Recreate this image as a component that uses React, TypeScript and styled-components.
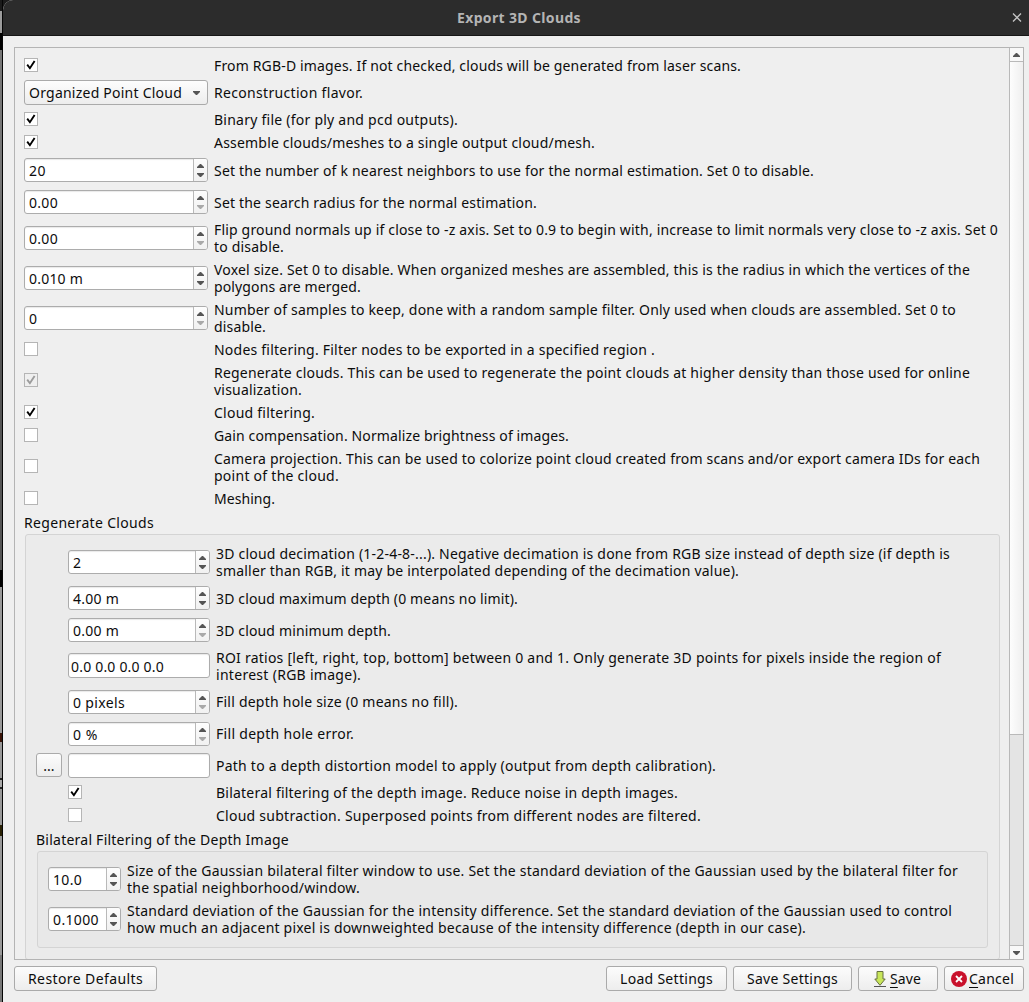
import React, { useLayoutEffect, useRef, useState } from "react";
import styled, { createGlobalStyle } from "styled-components";

const Global = createGlobalStyle`
  * { box-sizing: border-box; }
  body {
    margin: 0;
    background: #efefef;
    color: #0c0c0c;
    font: 14px/17px "Noto Sans", "Open Sans", sans-serif;
    overflow: hidden;
  }
`;

const Screen = styled.div`
  display: grid;
  grid-template-columns: 3px 1fr;
  width: 1029px;
  height: 1002px;
  background: #1c1c1c;
`;

const Backdrop = styled.div`
  border-right: 1px solid #050505;
  background: linear-gradient(
    #1a1a1a 0 11px, #9c9c9c 11px 33px, #000 33px 50px, #777 50px 180px,
    #555 320px 570px, #000 570px 587px, #999 587px 733px, #3a1408 733px 742px,
    #999 742px 778px, #222 778px 780px, #aaa 780px 787px, #222 787px 789px,
    #999 789px 825px, #2a2205 825px 836px, #999 836px 955px, #777 955px
  );
`;

const Window = styled.div`
  display: flex;
  flex-direction: column;
  min-width: 0;
  background: #efefef;
  border-radius: 10px 0 0 0;
  overflow: hidden;
`;

const TitleBar = styled.header`
  display: grid;
  grid-template-columns: 24px 1fr 24px;
  align-items: center;
  height: 36px;
  flex: none;
  background: #2c2c2c;
  border-bottom: 1px solid #171717;
  color: #b4b4b4;
`;

const Title = styled.h1`
  grid-column: 2;
  display: flex;
  justify-content: center;
  margin: 0 0 0 6px;
  font-size: 14px;
  font-weight: 700;
`;

const Content = styled.main`
  display: flex;
  flex-direction: column;
  flex: 1;
  gap: 6px;
  padding: 11px 5px 11px 11px;
  min-height: 0;
`;

const ScrollArea = styled.section`
  display: grid;
  grid-template-columns: 1fr 13px;
  height: 913px;
  border: 1px solid #b4b4b4;
  overflow: hidden;
`;

const Viewport = styled.div`
  display: flex;
  flex-direction: column;
  gap: 6px;
  padding: 9px 10px 0 9px;
  overflow: hidden;
`;

const Scrollbar = styled.div`
  display: grid;
  grid-template-rows: 13px 674px 1fr 14px;
  width: 14px;
  margin-left: -1px;
  border-left: 1px solid #b9b9b9;
  background: #e4e4e4;
`;

const ScrollButton = styled.div<{ $end?: boolean }>`
  display: grid;
  place-items: center;
  background: #f8f8f8;
  border-top: ${(p) => (p.$end ? "1px solid #b9b9b9" : "none")};
`;

const Thumb = styled.div`
  border: solid #b9b9b9;
  border-width: 1px 0;
  background: linear-gradient(90deg, #fdfdfd, #efefef);
`;

const Row = styled.div<{ $cols: string; $h: number }>`
  display: grid;
  grid-template-columns: ${(p) => p.$cols};
  column-gap: 6px;
  align-items: center;
  height: ${(p) => p.$h}px;
  flex: none;
`;

const Label = styled.div<{ $up?: boolean }>`
  display: flex;
  flex-direction: column;
  grid-column: -2;
  align-items: flex-start;
  margin-top: ${(p) => (p.$up ? -1 : 0)}px;
`;

const Heading = styled.div`
  display: flex;
  height: 17px;
  flex: none;
  margin: 1px 0 -3px;
`;

const Cell = styled.div<{ $lift: number }>`
  display: flex;
  grid-column: -3;
  align-self: center;
  margin-top: ${(p) => -p.$lift}px;
`;

const Field = styled.div<{ $h: number; $pad: number }>`
  display: flex;
  width: 100%;
  height: ${(p) => p.$h}px;
  border: 1px solid #acacac;
  border-radius: 3px;
  background: #fff;
  box-shadow: inset 0 1px 1px #e9e9e9;
  overflow: hidden;
  align-items: center;
  padding-left: ${(p) => p.$pad}px;
`;

const Value = styled.div`
  flex: 1;
  display: flex;
  padding-top: 1px;
`;

const Stepper = styled.div`
  display: flex;
  flex-direction: column;
  align-items: center;
  justify-content: center;
  gap: 5px;
  width: 14px;
  height: 100%;
  padding-right: 1px;
  border-left: 1px solid #b9b9b9;
  background: linear-gradient(#fdfdfd, #f1f1f1);
`;

const Arrow = styled.svg.attrs({ width: 7, height: 4, viewBox: "0 0 7 4" })<{ $down?: boolean; $off?: boolean }>`
  display: block;
  fill: ${(p) => (p.$off ? "#a9a9a9" : "#555")};
  transform: ${(p) => (p.$down ? "rotate(180deg)" : "none")};
`;

const Combo = styled.div`
  display: flex;
  align-items: center;
  justify-content: space-between;
  width: 100%;
  height: 25px;
  padding: 0 7px 0 4px;
  border: 1px solid #aaa;
  border-radius: 3px;
  background: linear-gradient(#fdfdfd, #ededed);
`;

const Box = styled.div<{ $off?: boolean }>`
  display: grid;
  place-items: center;
  width: 14px;
  height: 14px;
  border: 1px solid #b5b5b5;
  background: ${(p) => (p.$off ? "#efefef" : "#fff")};
  color: ${(p) => (p.$off ? "#9c9c9c" : "#000")};
`;

const Group = styled.section<{ $bg: string }>`
  display: flex;
  flex-direction: column;
  flex: none;
  gap: 6px;
  margin: 0 0 0 1px;
  padding: 10px 11px 11px 10px;
  border: 1px solid #d4d4d4;
  border-radius: 3px;
  background: ${(p) => p.$bg};
`;

const Button = styled.button<{ $w: number }>`
  display: flex;
  align-items: center;
  justify-content: center;
  width: ${(p) => p.$w}px;
  height: 25px;
  padding: 0;
  border: 1px solid #aaa;
  border-radius: 3px;
  background: linear-gradient(#fcfcfc, #ededed);
  color: inherit;
  font: inherit;
`;

const IconButton = styled(Button)`
  gap: 2px;
  padding-right: 3px;
`;

const BrowseButton = styled(Button)`
  align-self: start;
  height: 24px;
`;

const Footer = styled.footer`
  display: flex;
  gap: 6px;
`;

const Spacer = styled.div`
  flex: 1;
`;

const Line = styled.span`
  white-space: pre;
  display: block;
`;

const Mnemonic = styled.u`
  text-decoration-thickness: 1px;
  text-underline-offset: 3px;
`;

/* One line of text whose tracking is adjusted so that it fills a given width. */
function Fit({ w, children }: { w: number; children: React.ReactNode }) {
  const ref = useRef<HTMLSpanElement>(null);
  const [tracking, setTracking] = useState(0);
  useLayoutEffect(() => {
    const el = ref.current!;
    const natural = el.getBoundingClientRect().width;
    setTracking((w - natural) / (el.textContent ?? "").length);
  }, [w]);
  return <Line ref={ref} style={{ letterSpacing: tracking, width: tracking ? w : "max-content" }}>{children}</Line>;
}

type TextLine = [string, number];

const Up = () => <Arrow><path d="M3 0h1l3 3v1H0V3z" /></Arrow>;
const Down = ({ off }: { off?: boolean }) => <Arrow $down $off={off}><path d="M3 0h1l3 3v1H0V3z" /></Arrow>;

function Check({ on, off }: { on?: boolean; off?: boolean }) {
  return (
    <Box $off={off}>
      {on && (
        <svg width="10" height="10" viewBox="0 0 10 10" fill="none" stroke="currentColor" strokeWidth="1.9">
          <path d="M1.2 4.6 3.9 8.2 8.6 1" />
        </svg>
      )}
    </Box>
  );
}

function Spin({ text, w, atMin }: { text: string; w: number; atMin?: boolean }) {
  return (
    <Field $h={24} $pad={4}>
      <Value><Fit w={w}>{text}</Fit></Value>
      <Stepper><Up /><Down off={atMin} /></Stepper>
    </Field>
  );
}

const MAIN = "184px 1fr";
const INNER = "26px 142px 1fr";
const SMALL = "73px 1fr";

function Option({ cols, h, lines, lead, up, lift = 0, children }: {
  cols: string; h: number; lines: TextLine[]; lead?: React.ReactNode; up?: boolean; lift?: number; children: React.ReactNode;
}) {
  return (
    <Row $cols={cols} $h={h}>
      {lead}
      <Cell $lift={lift}>{children}</Cell>
      <Label $up={up}>{lines.map(([t, w]) => <Fit key={t} w={w}>{t}</Fit>)}</Label>
    </Row>
  );
}

function CheckOption({ cols, lines, on, off }: { cols: string; lines: TextLine[]; on?: boolean; off?: boolean }) {
  return (
    <Option cols={cols} h={lines.length * 17} lift={lines.length} lines={lines}>
      <Check on={on} off={off} />
    </Option>
  );
}

export default function App() {
  return (
    <>
      <Global />
      <Screen>
        <Backdrop />
        <Window>
          <TitleBar>
            <Title><Fit w={124}>Export 3D Clouds</Fit></Title>
            <svg width="24" height="20" viewBox="0 0 24 20" stroke="#c4c4c4" strokeWidth="1.3">
              <path d="m8 5.500 8 8m0-8-8 8" />
            </svg>
          </TitleBar>
          <Content>
            <ScrollArea>
              <Viewport>
                <CheckOption cols={MAIN} on lines={[["From RGB-D images. If not checked, clouds will be generated from laser scans.", 527]]} />
                <Option cols={MAIN} h={25} lines={[["Reconstruction flavor.", 149]]}>
                  <Combo><Fit w={153}>Organized Point Cloud</Fit><Down /></Combo>
                </Option>
                <CheckOption cols={MAIN} on lines={[["Binary file (for ply and pcd outputs).", 244]]} />
                <CheckOption cols={MAIN} on lines={[["Assemble clouds/meshes to a single output cloud/mesh.", 381]]} />
                <Option cols={MAIN} h={26} lines={[["Set the number of k nearest neighbors to use for the normal estimation. Set 0 to disable.", 600]]}><Spin text="20" w={17} /></Option>
                <Option cols={MAIN} h={26} lines={[["Set the search radius for the normal estimation.", 323]]}><Spin text="0.00" w={29} atMin /></Option>
                <Option cols={MAIN} h={34} lines={[["Flip ground normals up if close to -z axis. Set to 0.9 to begin with, increase to limit normals very close to -z axis. Set 0", 784], ["to disable.", 70]]}><Spin text="0.00" w={29} atMin /></Option>
                <Option cols={MAIN} h={34} lines={[["Voxel size. Set 0 to disable. When organized meshes are assembled, this is the radius in which the vertices of the", 756], ["polygons are merged.", 147]]}><Spin text="0.010 m" w={54} /></Option>
                <Option cols={MAIN} h={34} lines={[["Number of samples to keep, done with a random sample filter. Only used when clouds are assembled. Set 0 to", 742], ["disable.", 52]]}><Spin text="0" w={9} atMin /></Option>
                <CheckOption cols={MAIN} lines={[["Nodes filtering. Filter nodes to be exported in a specified region .", 441]]} />
                <CheckOption cols={MAIN} on off lines={[["Regenerate clouds. This can be used to regenerate the point clouds at higher density than those used for online", 756], ["visualization.", 88]]} />
                <CheckOption cols={MAIN} on lines={[["Cloud filtering.", 101]]} />
                <CheckOption cols={MAIN} lines={[["Gain compensation. Normalize brightness of images.", 355]]} />
                <CheckOption cols={MAIN} lines={[["Camera projection. This can be used to colorize point cloud created from scans and/or export camera IDs for each", 766], ["point of the cloud.", 125]]} />
                <CheckOption cols={MAIN} lines={[["Meshing.", 61]]} />
                <Heading><Fit w={130}>Regenerate Clouds</Fit></Heading>
                <Group $bg="#ebebeb">
                  <Option cols={INNER} h={34} lines={[["3D cloud decimation (1-2-4-8-...). Negative decimation is done from RGB size instead of depth size (if depth is", 734], ["smaller than RGB, it may be interpolated depending of the decimation value).", 523]]}><Spin text="2" w={9} /></Option>
                  <Option cols={INNER} h={26} lines={[["3D cloud maximum depth (0 means no limit).", 302]]}><Spin text="4.00 m" w={46} /></Option>
                  <Option cols={INNER} h={26} lines={[["3D cloud minimum depth.", 175]]}><Spin text="0.00 m" w={46} atMin /></Option>
                  <Option cols={INNER} h={34} lift={1} lines={[["ROI ratios [left, right, top, bottom] between 0 and 1. Only generate 3D points for pixels inside the region of", 725], ["interest (RGB image).", 145]]}>
                    <Field $h={25} $pad={2}><Value><Fit w={93}>0.0 0.0 0.0 0.0</Fit></Value></Field>
                  </Option>
                  <Option cols={INNER} h={26} up lines={[["Fill depth hole size (0 means no fill).", 242]]}><Spin text="0 pixels" w={52} atMin /></Option>
                  <Option cols={INNER} h={26} up lines={[["Fill depth hole error.", 138]]}><Spin text="0 %" w={25} atMin /></Option>
                  <Option cols={INNER} h={25} lead={<BrowseButton $w={26}>...</BrowseButton>} lines={[["Path to a depth distortion model to apply (output from depth calibration).", 500]]}>
                    <Field $h={25} $pad={2} />
                  </Option>
                  <CheckOption cols={INNER} on lines={[["Bilateral filtering of the depth image. Reduce noise in depth images.", 462]]} />
                  <CheckOption cols={INNER} lines={[["Cloud subtraction. Superposed points from different nodes are filtered.", 485]]} />
                  <Heading><Fit w={253}>Bilateral Filtering of the Depth Image</Fit></Heading>
                  <Group $bg="#e8e8e8">
                    <Option cols={SMALL} h={34} lines={[["Size of the Gaussian bilateral filter window to use. Set the standard deviation of the Gaussian used by the bilateral filter for", 831], ["the spatial neighborhood/window.", 233]]}><Spin text="10.0" w={29} /></Option>
                    <Option cols={SMALL} h={34} lines={[["Standard deviation of the Gaussian for the intensity difference. Set the standard deviation of the Gaussian used to control", 825], ["how much an adjacent pixel is downweighted because of the intensity difference (depth in our case).", 679]]}><Spin text="0.1000" w={46} /></Option>
                  </Group>
                </Group>
              </Viewport>
              <Scrollbar>
                <ScrollButton><Up /></ScrollButton>
                <Thumb />
                <Spacer />
                <ScrollButton $end><Down /></ScrollButton>
              </Scrollbar>
            </ScrollArea>
            <Footer>
              <Button $w={143}><Fit w={115}>Restore Defaults</Fit></Button>
              <Spacer />
              <Button $w={121}><Fit w={93}>Load Settings</Fit></Button>
              <Button $w={119}><Fit w={91}>Save Settings</Fit></Button>
              <IconButton $w={80}>
                <svg width="16" height="18" viewBox="0 0 16 18">
                  <path d="M5 1.500h6v7.500h2.200L8 15.300 2.800 9H5z" fill="#c8e65a" stroke="#66703f" />
                  <path d="M2 16.500h12" stroke="#555" />
                </svg>
                <Fit w={31}><Mnemonic>S</Mnemonic>ave</Fit>
              </IconButton>
              <IconButton $w={80}>
                <svg width="16" height="16" viewBox="0 0 16 16">
                  <circle cx="8" cy="8" r="8" fill="#c9112c" />
                  <path d="m5 5 6 6m0-6-6 6" stroke="#fff" strokeWidth="1.8" />
                </svg>
                <Fit w={45}><Mnemonic>C</Mnemonic>ancel</Fit>
              </IconButton>
            </Footer>
          </Content>
        </Window>
      </Screen>
    </>
  );
}
